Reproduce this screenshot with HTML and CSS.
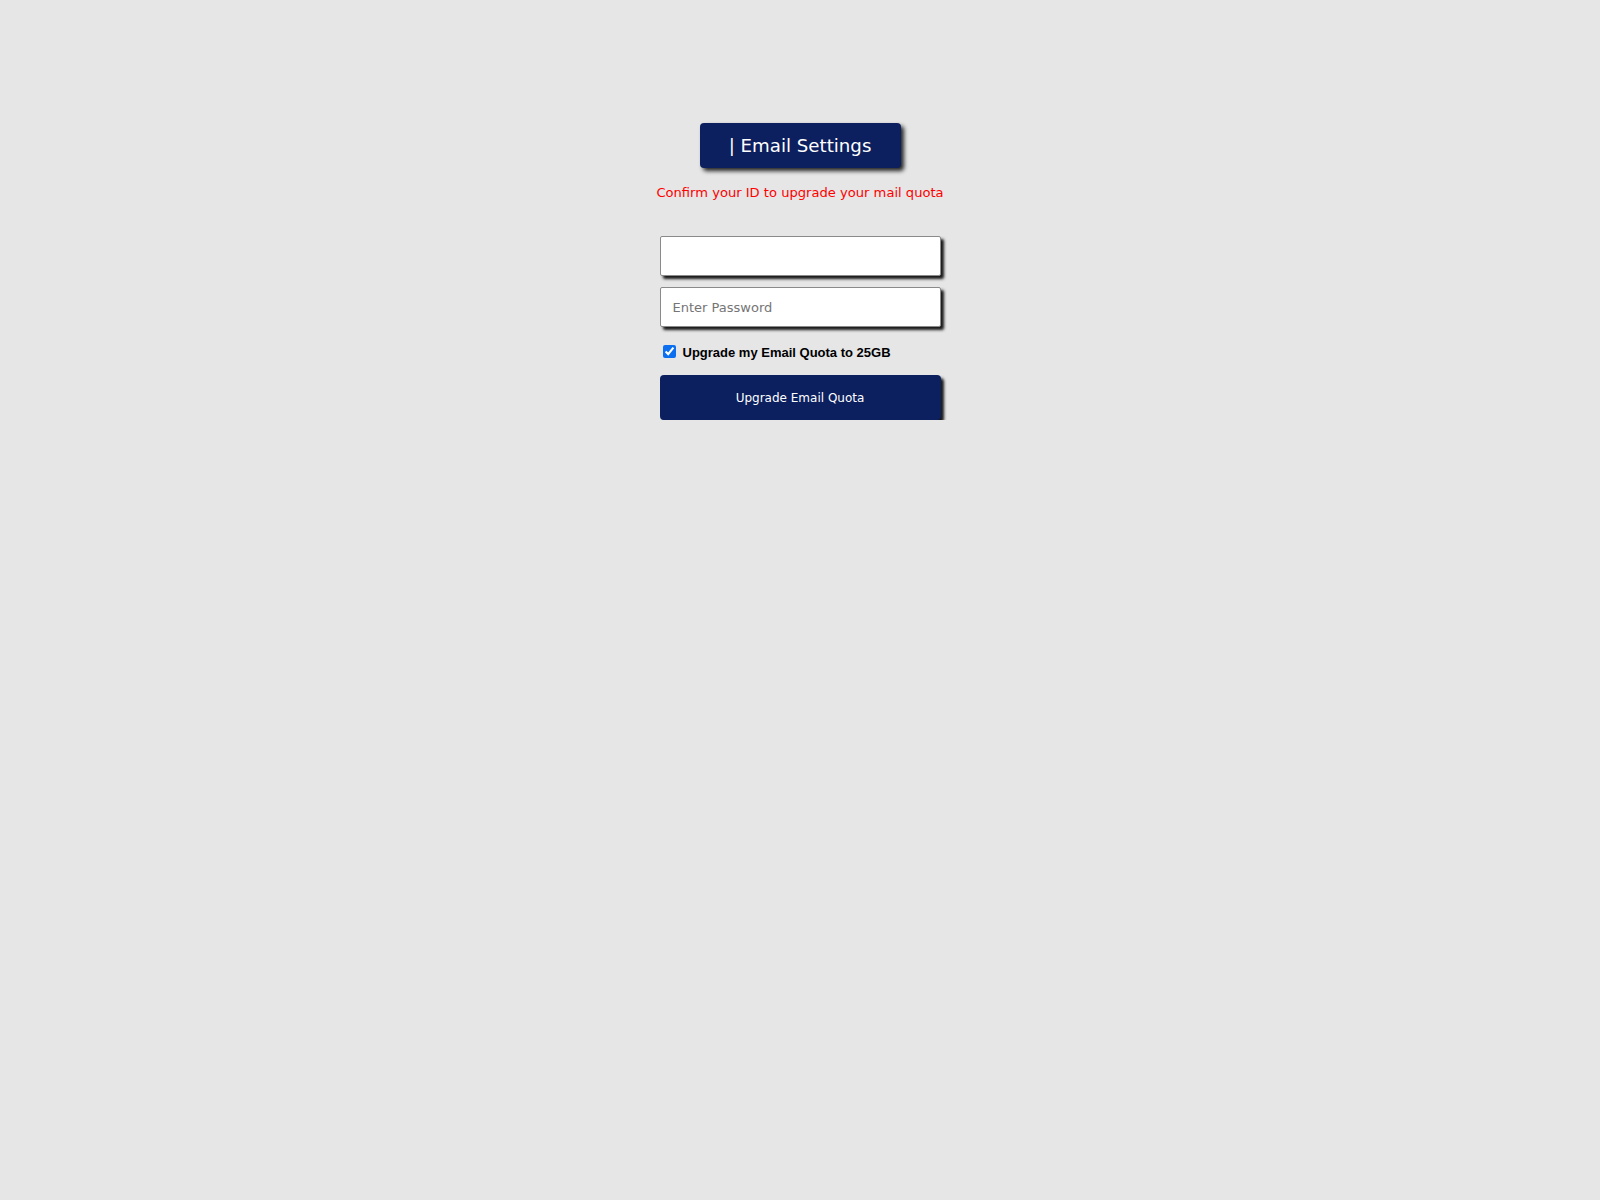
FILE: index.html
```html
<!DOCTYPE html>
<html lang="en">
<head>
<meta charset="utf-8">
<title>Email Settings</title>
<link rel="stylesheet" href="styles.css">
</head>
<body>
<main class="page">
  <div class="title">| Email Settings</div>
  <p class="notice">Confirm your ID to upgrade your mail quota</p>
  <div class="panel">
    <input class="field" type="text" aria-label="Email">
    <input class="field" type="password" placeholder="Enter Password">
    <label class="check">
      <input type="checkbox" checked>
      <span>Upgrade my Email Quota to 25GB</span>
    </label>
    <button class="submit" type="button">Upgrade Email Quota</button>
  </div>
</main>
</body>
</html>
```

FILE: styles.css
```css
html, body {
  margin: 0;
  padding: 0;
  background: #e6e6e6;
  font-family: "DejaVu Sans", Verdana, sans-serif;
}

.page {
  display: flex;
  flex-direction: column;
  align-items: center;
  padding-top: 123px;
}

.title {
  box-sizing: border-box;
  width: 201px;
  height: 45px;
  padding-top: 1px;
  background: #0c1f5e;
  color: #ffffff;
  font-size: 18.2px;
  line-height: 44px;
  text-align: center;
  border-radius: 4px;
  box-shadow: 3px 3px 4px rgba(0, 0, 0, 0.85);
}

.notice {
  margin: 17px 0 0 0;
  color: #ff0000;
  font-size: 13.1px;
  line-height: 15px;
}

.panel {
  display: flex;
  flex-direction: column;
  width: 281px;
  margin-top: 36px;
}

.field {
  box-sizing: border-box;
  width: 100%;
  height: 40px;
  margin: 0 0 11px 0;
  padding: 0 12px;
  border: 1px solid #8a8a8a;
  border-radius: 2px;
  background: #ffffff;
  font-family: "DejaVu Sans", Verdana, sans-serif;
  font-size: 13px;
  color: #000;
  box-shadow: 3px 3px 3px rgba(0, 0, 0, 0.9);
  outline: none;
}

.field::placeholder {
  color: #757575;
}

.check {
  display: flex;
  align-items: center;
  margin: 6px 0 0 3px;
  font-family: "Liberation Sans", Arial, sans-serif;
  font-weight: bold;
  font-size: 13px;
  color: #000;
  height: 16px;
}

.check input {
  width: 13px;
  height: 13px;
  margin: -2px 7px 0 0;
  accent-color: #0b6ff0;
}

.submit {
  box-sizing: border-box;
  width: 100%;
  height: 45px;
  margin-top: 15px;
  border: none;
  border-radius: 4px;
  background: #0c1f5e;
  color: #ffffff;
  font-family: "DejaVu Sans", Verdana, sans-serif;
  font-size: 12px;
  box-shadow: 3px 3px 3px rgba(0, 0, 0, 0.9);
  cursor: pointer;
}
```
